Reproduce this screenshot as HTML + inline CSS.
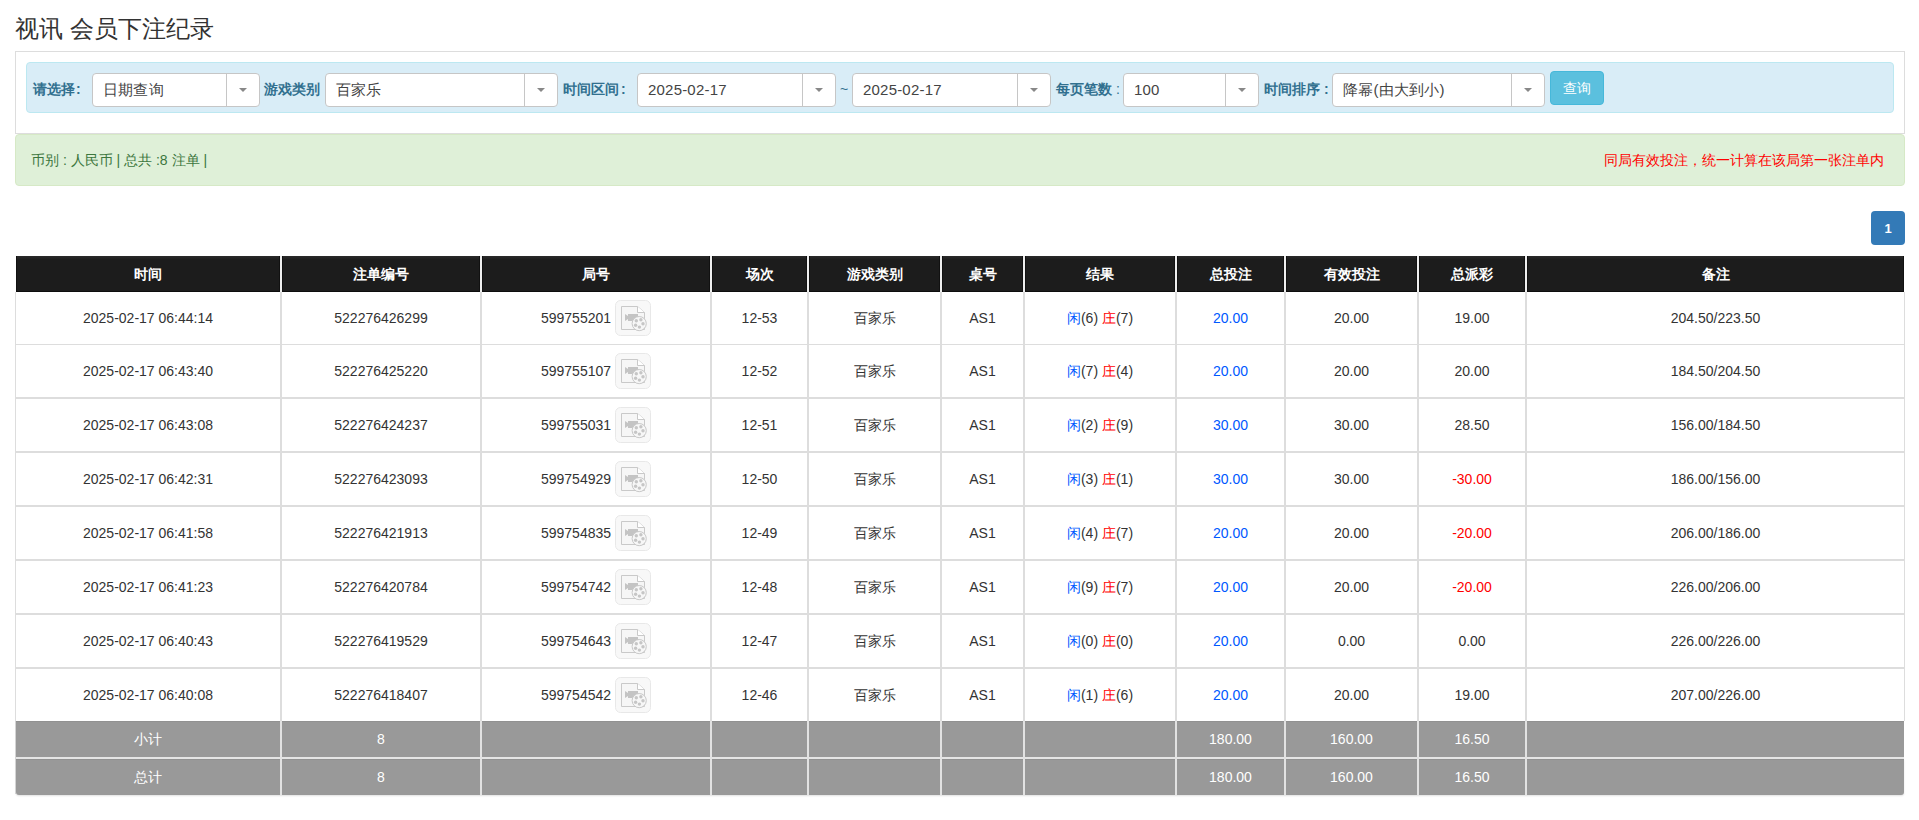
<!DOCTYPE html>
<html><head><meta charset="utf-8">
<style>
*{box-sizing:border-box;margin:0;padding:0}
html,body{width:1919px;height:820px;overflow:hidden;background:#fff}
body{font-family:"Liberation Sans",sans-serif;font-size:14px;color:#333;position:relative}
.a{position:absolute;white-space:nowrap}
.title{left:15px;top:12px;font-size:24px;line-height:34px;color:#333}
.panel{left:15px;top:51px;width:1890px;height:83px;border:1px solid #ddd;border-bottom:1px solid #ddd}
.well{left:26px;top:62px;width:1868px;height:51px;background:#d9edf7;border:1px solid #bce8f1;border-radius:4px}
.lbl{top:81px;font-size:14px;line-height:17px;font-weight:bold;color:#31708f}
.sel{top:73px;height:34px;background:#fff;border:1px solid #c6c6c6;border-radius:4px}
.sel .t{position:absolute;left:10px;top:0;line-height:32px;font-size:15px;color:#444;letter-spacing:0.2px}
.sel .d{position:absolute;top:0;bottom:0;border-left:1px solid #c6c6c6}
.sel .ar{position:absolute;top:14px;width:0;height:0;border-left:4px solid transparent;border-right:4px solid transparent;border-top:4px solid #888}
.btn{left:1550px;top:71px;width:54px;height:34px;background:#5bc0de;border:1px solid #46b8da;border-radius:4px;color:#fff;font-size:14px;line-height:32px;text-align:center}
.alert{left:15px;top:134px;width:1890px;height:52px;background:#dff0d8;border:1px solid #d6e9c6;border-radius:4px}
.at{top:152px;line-height:17px;font-size:14px;color:#3c763d}
.page1{left:1871px;top:211px;width:34px;height:34px;background:#337ab7;border-radius:4px;color:#fff;font-size:13px;font-weight:bold;text-align:center;line-height:36px}
.hd{top:256px;height:36px;background:linear-gradient(#2a2a2a 0,#1c1c1c 4px);border-top:0;padding-top:2px;border-bottom:1px solid #0d0d0d;border-left:1px solid #111;border-right:1px solid #111;color:#fff;font-weight:bold;text-align:center;line-height:32px}
.vl{width:2px;background:#ddd}
.hl{left:16px;width:1888px;background:#ddd}
.c{text-align:center;line-height:20px}
.blue{color:#0058ff}
.red{color:#f00}
.gr{left:16px;width:1888px;background:#999}
.gt{color:#fff;text-align:center;line-height:20px}
.ic{display:block;width:36px;height:36px}
</style></head><body>
<div class="a title">视讯 会员下注纪录</div>
<div class="a panel"></div>
<div class="a well"></div>

<div class="a lbl" style="left:33px">请选择<span style="margin-left:1px">:</span></div>
<div class="a sel" style="left:92px;width:168px"><span class="t">日期查询</span><span class="d" style="left:133px"></span><span class="ar" style="left:146px"></span></div>
<div class="a lbl" style="left:264px">游戏类别</div>
<div class="a sel" style="left:325px;width:233px"><span class="t">百家乐</span><span class="d" style="left:198px"></span><span class="ar" style="left:211px"></span></div>
<div class="a lbl" style="left:563px">时间区间<span style="margin-left:2px">:</span></div>
<div class="a sel" style="left:637px;width:199px"><span class="t">2025-02-17</span><span class="d" style="left:164px"></span><span class="ar" style="left:177px"></span></div>
<div class="a lbl" style="left:840px;font-weight:normal">~</div>
<div class="a sel" style="left:852px;width:199px"><span class="t">2025-02-17</span><span class="d" style="left:164px"></span><span class="ar" style="left:177px"></span></div>
<div class="a lbl" style="left:1056px">每页笔数 <span style="font-weight:normal">:</span></div>
<div class="a sel" style="left:1123px;width:136px"><span class="t">100</span><span class="d" style="left:101px"></span><span class="ar" style="left:114px"></span></div>
<div class="a lbl" style="left:1264px">时间排序 :</div>
<div class="a sel" style="left:1332px;width:213px"><span class="t">降幂(由大到小)</span><span class="d" style="left:178px"></span><span class="ar" style="left:191px"></span></div>
<div class="a btn">查询</div>

<div class="a alert"></div>
<div class="a at" style="left:31px">币别 : 人民币 | 总共 :8 注单 |</div>
<div class="a at" style="left:1604px;color:#f00">同局有效投注，统一计算在该局第一张注单内</div>

<div class="a page1">1</div>

<!-- TABLE -->
<div id="tbl">
<div class="a hd" style="left:16px;width:264px">时间</div>
<div class="a hd" style="left:282px;width:198px">注单编号</div>
<div class="a hd" style="left:482px;width:228px">局号</div>
<div class="a hd" style="left:712px;width:95px">场次</div>
<div class="a hd" style="left:809px;width:131px">游戏类别</div>
<div class="a hd" style="left:942px;width:81px">桌号</div>
<div class="a hd" style="left:1025px;width:150px">结果</div>
<div class="a hd" style="left:1177px;width:107px">总投注</div>
<div class="a hd" style="left:1286px;width:131px">有效投注</div>
<div class="a hd" style="left:1419px;width:106px">总派彩</div>
<div class="a hd" style="left:1527px;width:377px">备注</div>
<div class="a vl" style="left:280px;top:256px;height:36px;background:#eee"></div>
<div class="a vl" style="left:480px;top:256px;height:36px;background:#eee"></div>
<div class="a vl" style="left:710px;top:256px;height:36px;background:#eee"></div>
<div class="a vl" style="left:807px;top:256px;height:36px;background:#eee"></div>
<div class="a vl" style="left:940px;top:256px;height:36px;background:#eee"></div>
<div class="a vl" style="left:1023px;top:256px;height:36px;background:#eee"></div>
<div class="a vl" style="left:1175px;top:256px;height:36px;background:#eee"></div>
<div class="a vl" style="left:1284px;top:256px;height:36px;background:#eee"></div>
<div class="a vl" style="left:1417px;top:256px;height:36px;background:#eee"></div>
<div class="a vl" style="left:1525px;top:256px;height:36px;background:#eee"></div>
<div class="a" style="left:15px;top:292px;width:1px;height:429px;background:#ddd"></div>
<div class="a" style="left:1904px;top:292px;width:1px;height:429px;background:#ddd"></div>
<div class="a vl" style="left:280px;top:292px;height:429px"></div>
<div class="a vl" style="left:480px;top:292px;height:429px"></div>
<div class="a vl" style="left:710px;top:292px;height:429px"></div>
<div class="a vl" style="left:807px;top:292px;height:429px"></div>
<div class="a vl" style="left:940px;top:292px;height:429px"></div>
<div class="a vl" style="left:1023px;top:292px;height:429px"></div>
<div class="a vl" style="left:1175px;top:292px;height:429px"></div>
<div class="a vl" style="left:1284px;top:292px;height:429px"></div>
<div class="a vl" style="left:1417px;top:292px;height:429px"></div>
<div class="a vl" style="left:1525px;top:292px;height:429px"></div>
<div class="a hl" style="top:344px;height:1px"></div>
<div class="a hl" style="top:397px;height:2px"></div>
<div class="a hl" style="top:451px;height:2px"></div>
<div class="a hl" style="top:505px;height:2px"></div>
<div class="a hl" style="top:559px;height:2px"></div>
<div class="a hl" style="top:613px;height:2px"></div>
<div class="a hl" style="top:667px;height:2px"></div>
<div class="a c" style="left:16px;width:264px;top:307.5px">2025-02-17 06:44:14</div>
<div class="a c" style="left:282px;width:198px;top:307.5px">522276426299</div>
<div class="a c" style="left:482px;width:228px;top:307.5px;padding-right:40px">599755201</div>
<div class="a" style="left:615px;top:300px;width:36px;height:36px"><svg class="ic" width="36" height="36" viewBox="0 0 36 36"><rect x="0.5" y="0.5" width="35" height="35" rx="5" fill="#f8f8f8" stroke="#e8e8e8"/><path d="M6.5 6.5H22.5L29.5 12.5V29.5H6.5Z" fill="#f6f6f6" stroke="#c9c9c9"/><path d="M22.5 6.5V12.5H29.5" fill="#fff" stroke="#c9c9c9"/><rect x="13" y="14" width="10" height="7" fill="#c4c4c4"/><path d="M10 14L13 16V19L10 21Z" fill="#c4c4c4"/><circle cx="24.2" cy="23.6" r="7.1" fill="#f7f7f7" stroke="#c8c8c8"/><g fill="#c6c6c6"><circle cx="21.3" cy="20.8" r="1.7"/><circle cx="25.9" cy="19.7" r="1.7"/><circle cx="28" cy="23.7" r="1.7"/><circle cx="24.4" cy="27.1" r="1.7"/><circle cx="20.6" cy="25.3" r="1.7"/></g></svg></div>
<div class="a c" style="left:712px;width:95px;top:307.5px">12-53</div>
<div class="a c" style="left:809px;width:131px;top:307.5px">百家乐</div>
<div class="a c" style="left:942px;width:81px;top:307.5px">AS1</div>
<div class="a c" style="left:1025px;width:150px;top:307.5px"><span class="blue">闲</span>(6) <span class="red">庄</span>(7)</div>
<div class="a c blue" style="left:1177px;width:107px;top:307.5px">20.00</div>
<div class="a c" style="left:1286px;width:131px;top:307.5px">20.00</div>
<div class="a c" style="left:1419px;width:106px;top:307.5px">19.00</div>
<div class="a c" style="left:1527px;width:377px;top:307.5px">204.50/223.50</div>
<div class="a c" style="left:16px;width:264px;top:360.5px">2025-02-17 06:43:40</div>
<div class="a c" style="left:282px;width:198px;top:360.5px">522276425220</div>
<div class="a c" style="left:482px;width:228px;top:360.5px;padding-right:40px">599755107</div>
<div class="a" style="left:615px;top:353px;width:36px;height:36px"><svg class="ic" width="36" height="36" viewBox="0 0 36 36"><rect x="0.5" y="0.5" width="35" height="35" rx="5" fill="#f8f8f8" stroke="#e8e8e8"/><path d="M6.5 6.5H22.5L29.5 12.5V29.5H6.5Z" fill="#f6f6f6" stroke="#c9c9c9"/><path d="M22.5 6.5V12.5H29.5" fill="#fff" stroke="#c9c9c9"/><rect x="13" y="14" width="10" height="7" fill="#c4c4c4"/><path d="M10 14L13 16V19L10 21Z" fill="#c4c4c4"/><circle cx="24.2" cy="23.6" r="7.1" fill="#f7f7f7" stroke="#c8c8c8"/><g fill="#c6c6c6"><circle cx="21.3" cy="20.8" r="1.7"/><circle cx="25.9" cy="19.7" r="1.7"/><circle cx="28" cy="23.7" r="1.7"/><circle cx="24.4" cy="27.1" r="1.7"/><circle cx="20.6" cy="25.3" r="1.7"/></g></svg></div>
<div class="a c" style="left:712px;width:95px;top:360.5px">12-52</div>
<div class="a c" style="left:809px;width:131px;top:360.5px">百家乐</div>
<div class="a c" style="left:942px;width:81px;top:360.5px">AS1</div>
<div class="a c" style="left:1025px;width:150px;top:360.5px"><span class="blue">闲</span>(7) <span class="red">庄</span>(4)</div>
<div class="a c blue" style="left:1177px;width:107px;top:360.5px">20.00</div>
<div class="a c" style="left:1286px;width:131px;top:360.5px">20.00</div>
<div class="a c" style="left:1419px;width:106px;top:360.5px">20.00</div>
<div class="a c" style="left:1527px;width:377px;top:360.5px">184.50/204.50</div>
<div class="a c" style="left:16px;width:264px;top:414.5px">2025-02-17 06:43:08</div>
<div class="a c" style="left:282px;width:198px;top:414.5px">522276424237</div>
<div class="a c" style="left:482px;width:228px;top:414.5px;padding-right:40px">599755031</div>
<div class="a" style="left:615px;top:407px;width:36px;height:36px"><svg class="ic" width="36" height="36" viewBox="0 0 36 36"><rect x="0.5" y="0.5" width="35" height="35" rx="5" fill="#f8f8f8" stroke="#e8e8e8"/><path d="M6.5 6.5H22.5L29.5 12.5V29.5H6.5Z" fill="#f6f6f6" stroke="#c9c9c9"/><path d="M22.5 6.5V12.5H29.5" fill="#fff" stroke="#c9c9c9"/><rect x="13" y="14" width="10" height="7" fill="#c4c4c4"/><path d="M10 14L13 16V19L10 21Z" fill="#c4c4c4"/><circle cx="24.2" cy="23.6" r="7.1" fill="#f7f7f7" stroke="#c8c8c8"/><g fill="#c6c6c6"><circle cx="21.3" cy="20.8" r="1.7"/><circle cx="25.9" cy="19.7" r="1.7"/><circle cx="28" cy="23.7" r="1.7"/><circle cx="24.4" cy="27.1" r="1.7"/><circle cx="20.6" cy="25.3" r="1.7"/></g></svg></div>
<div class="a c" style="left:712px;width:95px;top:414.5px">12-51</div>
<div class="a c" style="left:809px;width:131px;top:414.5px">百家乐</div>
<div class="a c" style="left:942px;width:81px;top:414.5px">AS1</div>
<div class="a c" style="left:1025px;width:150px;top:414.5px"><span class="blue">闲</span>(2) <span class="red">庄</span>(9)</div>
<div class="a c blue" style="left:1177px;width:107px;top:414.5px">30.00</div>
<div class="a c" style="left:1286px;width:131px;top:414.5px">30.00</div>
<div class="a c" style="left:1419px;width:106px;top:414.5px">28.50</div>
<div class="a c" style="left:1527px;width:377px;top:414.5px">156.00/184.50</div>
<div class="a c" style="left:16px;width:264px;top:468.5px">2025-02-17 06:42:31</div>
<div class="a c" style="left:282px;width:198px;top:468.5px">522276423093</div>
<div class="a c" style="left:482px;width:228px;top:468.5px;padding-right:40px">599754929</div>
<div class="a" style="left:615px;top:461px;width:36px;height:36px"><svg class="ic" width="36" height="36" viewBox="0 0 36 36"><rect x="0.5" y="0.5" width="35" height="35" rx="5" fill="#f8f8f8" stroke="#e8e8e8"/><path d="M6.5 6.5H22.5L29.5 12.5V29.5H6.5Z" fill="#f6f6f6" stroke="#c9c9c9"/><path d="M22.5 6.5V12.5H29.5" fill="#fff" stroke="#c9c9c9"/><rect x="13" y="14" width="10" height="7" fill="#c4c4c4"/><path d="M10 14L13 16V19L10 21Z" fill="#c4c4c4"/><circle cx="24.2" cy="23.6" r="7.1" fill="#f7f7f7" stroke="#c8c8c8"/><g fill="#c6c6c6"><circle cx="21.3" cy="20.8" r="1.7"/><circle cx="25.9" cy="19.7" r="1.7"/><circle cx="28" cy="23.7" r="1.7"/><circle cx="24.4" cy="27.1" r="1.7"/><circle cx="20.6" cy="25.3" r="1.7"/></g></svg></div>
<div class="a c" style="left:712px;width:95px;top:468.5px">12-50</div>
<div class="a c" style="left:809px;width:131px;top:468.5px">百家乐</div>
<div class="a c" style="left:942px;width:81px;top:468.5px">AS1</div>
<div class="a c" style="left:1025px;width:150px;top:468.5px"><span class="blue">闲</span>(3) <span class="red">庄</span>(1)</div>
<div class="a c blue" style="left:1177px;width:107px;top:468.5px">30.00</div>
<div class="a c" style="left:1286px;width:131px;top:468.5px">30.00</div>
<div class="a c red" style="left:1419px;width:106px;top:468.5px">-30.00</div>
<div class="a c" style="left:1527px;width:377px;top:468.5px">186.00/156.00</div>
<div class="a c" style="left:16px;width:264px;top:522.5px">2025-02-17 06:41:58</div>
<div class="a c" style="left:282px;width:198px;top:522.5px">522276421913</div>
<div class="a c" style="left:482px;width:228px;top:522.5px;padding-right:40px">599754835</div>
<div class="a" style="left:615px;top:515px;width:36px;height:36px"><svg class="ic" width="36" height="36" viewBox="0 0 36 36"><rect x="0.5" y="0.5" width="35" height="35" rx="5" fill="#f8f8f8" stroke="#e8e8e8"/><path d="M6.5 6.5H22.5L29.5 12.5V29.5H6.5Z" fill="#f6f6f6" stroke="#c9c9c9"/><path d="M22.5 6.5V12.5H29.5" fill="#fff" stroke="#c9c9c9"/><rect x="13" y="14" width="10" height="7" fill="#c4c4c4"/><path d="M10 14L13 16V19L10 21Z" fill="#c4c4c4"/><circle cx="24.2" cy="23.6" r="7.1" fill="#f7f7f7" stroke="#c8c8c8"/><g fill="#c6c6c6"><circle cx="21.3" cy="20.8" r="1.7"/><circle cx="25.9" cy="19.7" r="1.7"/><circle cx="28" cy="23.7" r="1.7"/><circle cx="24.4" cy="27.1" r="1.7"/><circle cx="20.6" cy="25.3" r="1.7"/></g></svg></div>
<div class="a c" style="left:712px;width:95px;top:522.5px">12-49</div>
<div class="a c" style="left:809px;width:131px;top:522.5px">百家乐</div>
<div class="a c" style="left:942px;width:81px;top:522.5px">AS1</div>
<div class="a c" style="left:1025px;width:150px;top:522.5px"><span class="blue">闲</span>(4) <span class="red">庄</span>(7)</div>
<div class="a c blue" style="left:1177px;width:107px;top:522.5px">20.00</div>
<div class="a c" style="left:1286px;width:131px;top:522.5px">20.00</div>
<div class="a c red" style="left:1419px;width:106px;top:522.5px">-20.00</div>
<div class="a c" style="left:1527px;width:377px;top:522.5px">206.00/186.00</div>
<div class="a c" style="left:16px;width:264px;top:576.5px">2025-02-17 06:41:23</div>
<div class="a c" style="left:282px;width:198px;top:576.5px">522276420784</div>
<div class="a c" style="left:482px;width:228px;top:576.5px;padding-right:40px">599754742</div>
<div class="a" style="left:615px;top:569px;width:36px;height:36px"><svg class="ic" width="36" height="36" viewBox="0 0 36 36"><rect x="0.5" y="0.5" width="35" height="35" rx="5" fill="#f8f8f8" stroke="#e8e8e8"/><path d="M6.5 6.5H22.5L29.5 12.5V29.5H6.5Z" fill="#f6f6f6" stroke="#c9c9c9"/><path d="M22.5 6.5V12.5H29.5" fill="#fff" stroke="#c9c9c9"/><rect x="13" y="14" width="10" height="7" fill="#c4c4c4"/><path d="M10 14L13 16V19L10 21Z" fill="#c4c4c4"/><circle cx="24.2" cy="23.6" r="7.1" fill="#f7f7f7" stroke="#c8c8c8"/><g fill="#c6c6c6"><circle cx="21.3" cy="20.8" r="1.7"/><circle cx="25.9" cy="19.7" r="1.7"/><circle cx="28" cy="23.7" r="1.7"/><circle cx="24.4" cy="27.1" r="1.7"/><circle cx="20.6" cy="25.3" r="1.7"/></g></svg></div>
<div class="a c" style="left:712px;width:95px;top:576.5px">12-48</div>
<div class="a c" style="left:809px;width:131px;top:576.5px">百家乐</div>
<div class="a c" style="left:942px;width:81px;top:576.5px">AS1</div>
<div class="a c" style="left:1025px;width:150px;top:576.5px"><span class="blue">闲</span>(9) <span class="red">庄</span>(7)</div>
<div class="a c blue" style="left:1177px;width:107px;top:576.5px">20.00</div>
<div class="a c" style="left:1286px;width:131px;top:576.5px">20.00</div>
<div class="a c red" style="left:1419px;width:106px;top:576.5px">-20.00</div>
<div class="a c" style="left:1527px;width:377px;top:576.5px">226.00/206.00</div>
<div class="a c" style="left:16px;width:264px;top:630.5px">2025-02-17 06:40:43</div>
<div class="a c" style="left:282px;width:198px;top:630.5px">522276419529</div>
<div class="a c" style="left:482px;width:228px;top:630.5px;padding-right:40px">599754643</div>
<div class="a" style="left:615px;top:623px;width:36px;height:36px"><svg class="ic" width="36" height="36" viewBox="0 0 36 36"><rect x="0.5" y="0.5" width="35" height="35" rx="5" fill="#f8f8f8" stroke="#e8e8e8"/><path d="M6.5 6.5H22.5L29.5 12.5V29.5H6.5Z" fill="#f6f6f6" stroke="#c9c9c9"/><path d="M22.5 6.5V12.5H29.5" fill="#fff" stroke="#c9c9c9"/><rect x="13" y="14" width="10" height="7" fill="#c4c4c4"/><path d="M10 14L13 16V19L10 21Z" fill="#c4c4c4"/><circle cx="24.2" cy="23.6" r="7.1" fill="#f7f7f7" stroke="#c8c8c8"/><g fill="#c6c6c6"><circle cx="21.3" cy="20.8" r="1.7"/><circle cx="25.9" cy="19.7" r="1.7"/><circle cx="28" cy="23.7" r="1.7"/><circle cx="24.4" cy="27.1" r="1.7"/><circle cx="20.6" cy="25.3" r="1.7"/></g></svg></div>
<div class="a c" style="left:712px;width:95px;top:630.5px">12-47</div>
<div class="a c" style="left:809px;width:131px;top:630.5px">百家乐</div>
<div class="a c" style="left:942px;width:81px;top:630.5px">AS1</div>
<div class="a c" style="left:1025px;width:150px;top:630.5px"><span class="blue">闲</span>(0) <span class="red">庄</span>(0)</div>
<div class="a c blue" style="left:1177px;width:107px;top:630.5px">20.00</div>
<div class="a c" style="left:1286px;width:131px;top:630.5px">0.00</div>
<div class="a c" style="left:1419px;width:106px;top:630.5px">0.00</div>
<div class="a c" style="left:1527px;width:377px;top:630.5px">226.00/226.00</div>
<div class="a c" style="left:16px;width:264px;top:684.5px">2025-02-17 06:40:08</div>
<div class="a c" style="left:282px;width:198px;top:684.5px">522276418407</div>
<div class="a c" style="left:482px;width:228px;top:684.5px;padding-right:40px">599754542</div>
<div class="a" style="left:615px;top:677px;width:36px;height:36px"><svg class="ic" width="36" height="36" viewBox="0 0 36 36"><rect x="0.5" y="0.5" width="35" height="35" rx="5" fill="#f8f8f8" stroke="#e8e8e8"/><path d="M6.5 6.5H22.5L29.5 12.5V29.5H6.5Z" fill="#f6f6f6" stroke="#c9c9c9"/><path d="M22.5 6.5V12.5H29.5" fill="#fff" stroke="#c9c9c9"/><rect x="13" y="14" width="10" height="7" fill="#c4c4c4"/><path d="M10 14L13 16V19L10 21Z" fill="#c4c4c4"/><circle cx="24.2" cy="23.6" r="7.1" fill="#f7f7f7" stroke="#c8c8c8"/><g fill="#c6c6c6"><circle cx="21.3" cy="20.8" r="1.7"/><circle cx="25.9" cy="19.7" r="1.7"/><circle cx="28" cy="23.7" r="1.7"/><circle cx="24.4" cy="27.1" r="1.7"/><circle cx="20.6" cy="25.3" r="1.7"/></g></svg></div>
<div class="a c" style="left:712px;width:95px;top:684.5px">12-46</div>
<div class="a c" style="left:809px;width:131px;top:684.5px">百家乐</div>
<div class="a c" style="left:942px;width:81px;top:684.5px">AS1</div>
<div class="a c" style="left:1025px;width:150px;top:684.5px"><span class="blue">闲</span>(1) <span class="red">庄</span>(6)</div>
<div class="a c blue" style="left:1177px;width:107px;top:684.5px">20.00</div>
<div class="a c" style="left:1286px;width:131px;top:684.5px">20.00</div>
<div class="a c" style="left:1419px;width:106px;top:684.5px">19.00</div>
<div class="a c" style="left:1527px;width:377px;top:684.5px">207.00/226.00</div>
<div class="a gr" style="top:721px;height:36px"></div>
<div class="a gr" style="top:759px;height:36px;border-radius:0 0 3px 3px;box-shadow:0 1px 2px rgba(0,0,0,.12)"></div>
<div class="a" style="left:16px;top:757px;width:1888px;height:2px;background:#e5e5e5"></div>
<div class="a" style="left:16px;top:721px;width:1888px;height:1px;background:#919191"></div>
<div class="a" style="left:16px;top:759px;width:1888px;height:1px;background:#919191"></div>
<div class="a" style="left:15px;top:721px;width:1px;height:73px;background:#d4d4d4"></div>
<div class="a vl" style="left:280px;top:721px;height:74px;background:#e2e2e2"></div>
<div class="a vl" style="left:480px;top:721px;height:74px;background:#e2e2e2"></div>
<div class="a vl" style="left:710px;top:721px;height:74px;background:#e2e2e2"></div>
<div class="a vl" style="left:807px;top:721px;height:74px;background:#e2e2e2"></div>
<div class="a vl" style="left:940px;top:721px;height:74px;background:#e2e2e2"></div>
<div class="a vl" style="left:1023px;top:721px;height:74px;background:#e2e2e2"></div>
<div class="a vl" style="left:1175px;top:721px;height:74px;background:#e2e2e2"></div>
<div class="a vl" style="left:1284px;top:721px;height:74px;background:#e2e2e2"></div>
<div class="a vl" style="left:1417px;top:721px;height:74px;background:#e2e2e2"></div>
<div class="a vl" style="left:1525px;top:721px;height:74px;background:#e2e2e2"></div>
<div class="a gt" style="left:16px;width:264px;top:728.5px">小计</div>
<div class="a gt" style="left:282px;width:198px;top:728.5px">8</div>
<div class="a gt" style="left:1177px;width:107px;top:728.5px">180.00</div>
<div class="a gt" style="left:1286px;width:131px;top:728.5px">160.00</div>
<div class="a gt" style="left:1419px;width:106px;top:728.5px">16.50</div>
<div class="a gt" style="left:16px;width:264px;top:766.5px">总计</div>
<div class="a gt" style="left:282px;width:198px;top:766.5px">8</div>
<div class="a gt" style="left:1177px;width:107px;top:766.5px">180.00</div>
<div class="a gt" style="left:1286px;width:131px;top:766.5px">160.00</div>
<div class="a gt" style="left:1419px;width:106px;top:766.5px">16.50</div>
</div><!--end-->
</body></html>
